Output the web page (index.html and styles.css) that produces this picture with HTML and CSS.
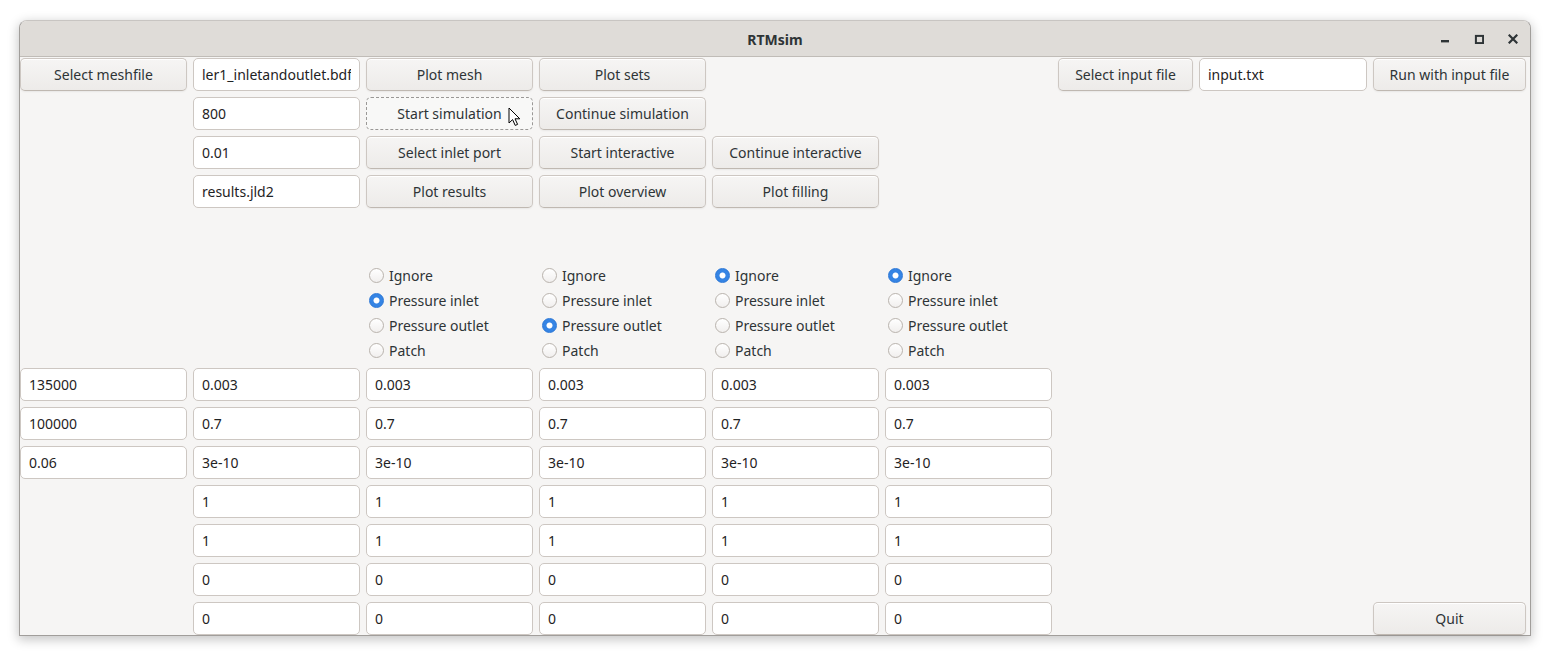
FILE: index.html
```html
<!DOCTYPE html>
<html>
<head>
<meta charset="utf-8">
<title>RTMsim</title>
<link rel="stylesheet" href="styles.css">
</head>
<body>
<div class="window">
  <div class="titlebar">
    <div class="tb-side"></div>
    <div class="title">RTMsim</div>
    <div class="tb-side controls">
      <span class="ctl"><svg width="10" height="10" viewBox="0 0 10 10"><rect x="1" y="6" width="8" height="2.4" fill="#2e3436"/></svg></span>
      <span class="ctl"><svg width="10" height="10" viewBox="0 0 10 10"><rect x="1.9" y="1.9" width="7.2" height="7.2" fill="none" stroke="#2e3436" stroke-width="2"/></svg></span>
      <span class="ctl"><svg width="10" height="10" viewBox="0 0 10 10"><path d="M1.5 1.5 L8.5 8.5 M8.5 1.5 L1.5 8.5" stroke="#2e3436" stroke-width="2.2" stroke-linecap="square"/></svg></span>
    </div>
  </div>
  <div class="content">
    <div class="grid">
      <button class="btn">Select meshfile</button>
      <input class="entry" value="ler1_inletandoutlet.bdf">
      <button class="btn">Plot mesh</button>
      <button class="btn">Plot sets</button>
      <button class="btn c7">Select input file</button>
      <input class="entry" value="input.txt">
      <button class="btn">Run with input file</button>

      <input class="entry c2" value="800">
      <button class="btn focus">Start simulation<svg class="cursor" width="14" height="20" viewBox="0 0 14 20"><path d="M1 1 L1 16 L4.6 12.6 L7.2 18.4 L9.6 17.4 L7 11.8 L11.8 11.8 Z" fill="#fff" stroke="#000" stroke-width="1" stroke-linejoin="round"/></svg></button>
      <button class="btn">Continue simulation</button>

      <input class="entry c2" value="0.01">
      <button class="btn">Select inlet port</button>
      <button class="btn">Start interactive</button>
      <button class="btn">Continue interactive</button>

      <input class="entry c2" value="results.jld2">
      <button class="btn">Plot results</button>
      <button class="btn">Plot overview</button>
      <button class="btn">Plot filling</button>

      <div class="spacer"></div>

      <div class="radios c3">
        <label class="radio"><span class="dot"></span>Ignore</label>
        <label class="radio"><span class="dot on"></span>Pressure inlet</label>
        <label class="radio"><span class="dot"></span>Pressure outlet</label>
        <label class="radio"><span class="dot"></span>Patch</label>
      </div>
      <div class="radios">
        <label class="radio"><span class="dot"></span>Ignore</label>
        <label class="radio"><span class="dot"></span>Pressure inlet</label>
        <label class="radio"><span class="dot on"></span>Pressure outlet</label>
        <label class="radio"><span class="dot"></span>Patch</label>
      </div>
      <div class="radios">
        <label class="radio"><span class="dot on"></span>Ignore</label>
        <label class="radio"><span class="dot"></span>Pressure inlet</label>
        <label class="radio"><span class="dot"></span>Pressure outlet</label>
        <label class="radio"><span class="dot"></span>Patch</label>
      </div>
      <div class="radios">
        <label class="radio"><span class="dot on"></span>Ignore</label>
        <label class="radio"><span class="dot"></span>Pressure inlet</label>
        <label class="radio"><span class="dot"></span>Pressure outlet</label>
        <label class="radio"><span class="dot"></span>Patch</label>
      </div>

      <input class="entry c1" value="135000">
      <input class="entry" value="0.003">
      <input class="entry" value="0.003">
      <input class="entry" value="0.003">
      <input class="entry" value="0.003">
      <input class="entry" value="0.003">

      <input class="entry c1" value="100000">
      <input class="entry" value="0.7">
      <input class="entry" value="0.7">
      <input class="entry" value="0.7">
      <input class="entry" value="0.7">
      <input class="entry" value="0.7">

      <input class="entry c1" value="0.06">
      <input class="entry" value="3e-10">
      <input class="entry" value="3e-10">
      <input class="entry" value="3e-10">
      <input class="entry" value="3e-10">
      <input class="entry" value="3e-10">

      <input class="entry c2" value="1">
      <input class="entry" value="1">
      <input class="entry" value="1">
      <input class="entry" value="1">
      <input class="entry" value="1">

      <input class="entry c2" value="1">
      <input class="entry" value="1">
      <input class="entry" value="1">
      <input class="entry" value="1">
      <input class="entry" value="1">

      <input class="entry c2" value="0">
      <input class="entry" value="0">
      <input class="entry" value="0">
      <input class="entry" value="0">
      <input class="entry" value="0">

      <input class="entry c2" value="0">
      <input class="entry" value="0">
      <input class="entry" value="0">
      <input class="entry" value="0">
      <input class="entry" value="0">
      <button class="btn c9">Quit</button>
    </div>
  </div>
</div>
</body>
</html>
```
FILE: styles.css
```css
html, body {
  margin: 0;
  padding: 0;
  background: #ffffff;
  width: 1546px;
  height: 653px;
  overflow: hidden;
}

body {
  font-family: "Noto Sans", "Open Sans", sans-serif;
  font-size: 14px;
  color: #2e3436;
}

.window {
  margin: 20px 0 0 19px;
  width: 1512px;
  box-sizing: border-box;
  border: 1px solid #a19e9b;
  border-top-color: #c8c5c2;
  border-radius: 8px 8px 0 0;
  background: #f6f5f4;
  box-shadow: 0 3px 11px 1px rgba(0, 0, 0, 0.22);
}

.titlebar {
  height: 35px;
  border-bottom: 1px solid #c0bcb7;
  background: #dfdcd8;
  border-radius: 7px 7px 0 0;
  display: grid;
  grid-template-columns: 1fr auto 1fr;
  align-items: center;
}

.title {
  font-weight: bold;
  font-size: 14px;
  color: #2e3436;
  padding-top: 1px;
}

.controls {
  display: flex;
  justify-content: flex-end;
  height: 100%;
}

.ctl {
  width: 34px;
  display: flex;
  align-items: center;
  justify-content: center;
}

.content {
  padding-top: 1px;
  height: 578px;
  box-sizing: border-box;
}

.grid {
  display: grid;
  grid-template-columns: repeat(6, 167px) 135px 168px 153px;
  grid-template-rows: 33px 33px 33px 33px 42px 100px repeat(7, 33px);
  column-gap: 6px;
  row-gap: 6px;
}

.c1 { grid-column-start: 1; }
.c2 { grid-column-start: 2; }
.c3 { grid-column-start: 3; }
.c7 { grid-column-start: 7; }
.c9 { grid-column-start: 9; }

.spacer {
  grid-column: 1 / -1;
}

.btn {
  position: relative;
  height: 33px;
  box-sizing: border-box;
  margin: 0;
  padding: 0 4px;
  border: 1px solid #cdc7c2;
  border-bottom-color: #bfb8b1;
  border-radius: 5px;
  background: linear-gradient(#f6f5f4, #edebe9);
  box-shadow: inset 0 1px #ffffff, 0 1px 2px rgba(0, 0, 0, 0.06);
  font-family: "Noto Sans", "Open Sans", sans-serif;
  font-size: 14px;
  color: #2e3436;
  white-space: nowrap;
}

.btn.focus {
  background: #f8f8f7;
  border: 1px dashed #9a9896;
  box-shadow: none;
}

.cursor {
  position: absolute;
  left: 141px;
  top: 9px;
}

.entry {
  height: 33px;
  width: 100%;
  box-sizing: border-box;
  margin: 0;
  padding: 0 8px;
  border: 1px solid #cdc7c2;
  border-radius: 5px;
  background: #ffffff;
  font-family: "Noto Sans", "Open Sans", sans-serif;
  font-size: 14px;
  color: #1f2324;
  outline: none;
}

.radios {
  display: flex;
  flex-direction: column;
  padding-left: 3px;
  padding-top: 1px;
}

.radio {
  height: 25px;
  flex: none;
  display: flex;
  align-items: center;
  gap: 5px;
  font-size: 14px;
  color: #2e3436;
  white-space: nowrap;
}

.dot {
  width: 15px;
  height: 15px;
  box-sizing: border-box;
  border-radius: 50%;
  border: 1px solid #b9b3ad;
  background: linear-gradient(#ffffff, #f1efee);
  flex: none;
}

.dot.on {
  border: 1px solid #2a76d6;
  background: radial-gradient(circle, #ffffff 0, #ffffff 2.6px, #3584e4 3.4px);
}
```
